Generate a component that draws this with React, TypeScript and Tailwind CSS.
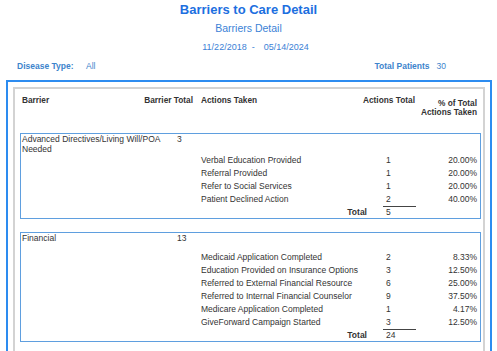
const barriers = [
  {
    name: "Advanced Directives/Living Will/POA Needed",
    total: 3,
    actions: [
      { label: "Verbal Education Provided", count: 1, pct: "20.00%" },
      { label: "Referral Provided", count: 1, pct: "20.00%" },
      { label: "Refer to Social Services", count: 1, pct: "20.00%" },
      { label: "Patient Declined Action", count: 2, pct: "40.00%" },
    ],
    sum: 5,
  },
  {
    name: "Financial",
    total: 13,
    actions: [
      { label: "Medicaid Application Completed", count: 2, pct: "8.33%" },
      { label: "Education Provided on Insurance Options", count: 3, pct: "12.50%" },
      { label: "Referred to External Financial Resource", count: 6, pct: "25.00%" },
      { label: "Referred to Internal Financial Counselor", count: 9, pct: "37.50%" },
      { label: "Medicare Application Completed", count: 1, pct: "4.17%" },
      { label: "GiveForward Campaign Started", count: 3, pct: "12.50%" },
    ],
    sum: 24,
  },
];

function BarrierGroup({ b }: { b: (typeof barriers)[number] }) {
  return (
    <div className="ml-[5px] w-[461px] border border-[#5f9fdf] text-[8.5px] text-[#333]">
      {/* barrier name + total */}
      <div className="flex min-h-[18px] pl-[1px] leading-[10px]">
        <div className="w-[155px]">{b.name}</div>
        <div>{b.total}</div>
      </div>

      {b.actions.map((a) => (
        <div key={a.label} className="flex h-[13px] pl-[180px] leading-[13px]">
          <div className="w-[185px] whitespace-nowrap">{a.label}</div>
          <div className="w-[30px]">{a.count}</div>
          <div className="w-[61px] text-right">{a.pct}</div>
        </div>
      ))}

      <div className="flex h-[12px] leading-[12px]">
        <div className="w-[362px] pr-[16px] text-right font-bold">Total</div>
        <div className="w-[33px] border-t border-[#444] pl-[3px] leading-[11px]">{b.sum}</div>
      </div>
    </div>
  );
}

export default function App() {
  return (
    <div className="h-[351px] overflow-hidden bg-white font-['Liberation_Sans',Arial,sans-serif]">
      {/* heading */}
      <div className="flex flex-col items-center pt-[1px]">
        <div className="h-[18px] text-[13px] font-bold leading-[18px] text-[#1c6fe0]">
          Barriers to Care Detail
        </div>
        <div className="mt-[2px] h-[14px] text-[10.5px] leading-[14px] text-[#3b82d6]">Barriers Detail</div>
        <div className="ml-[14px] mt-[6px] flex h-[12px] text-[9px] leading-[12px] text-[#3b82d6]">
          <span>11/22/2018</span>
          <span className="ml-[5px]">-</span>
          <span className="ml-[9px]">05/14/2024</span>
        </div>
      </div>

      {/* filters */}
      <div className="mt-[7px] flex h-[12px] text-[8.5px] leading-[12px] text-[#3d84cc]">
        <span className="ml-[17px] w-[69px] font-bold">Disease Type:</span>
        <span>All</span>
        <span className="ml-[279px] w-[62px] font-bold">Total Patients</span>
        <span>30</span>
      </div>

      {/* report frame */}
      <div className="ml-[6px] mt-[8px] w-[486px] border-2 border-[#2d8cf0] p-[5px] pb-[40px]">
        <div className="border-2 border-[#d3d3d3] pb-[20px]">
          {/* column headers */}
          <div className="flex h-[44px] pl-[7px] pt-[6px] text-[8.3px] font-bold leading-[10px] text-[#333]">
            <div className="w-[115px]">Barrier</div>
            <div className="w-[56px] whitespace-nowrap text-right">Barrier Total</div>
            <div className="ml-[8px] w-[162px]">Actions Taken</div>
            <div className="w-[50px] whitespace-nowrap">Actions Total</div>
            <div className="w-[64px] whitespace-nowrap pt-[3.5px] text-right leading-[9.5px]">
              % of Total
              <br />
              Actions Taken
            </div>
          </div>

          <div className="flex flex-col gap-[13px]">
            {barriers.map((b) => (
              <BarrierGroup key={b.name} b={b} />
            ))}
          </div>
        </div>
      </div>
    </div>
  );
}
